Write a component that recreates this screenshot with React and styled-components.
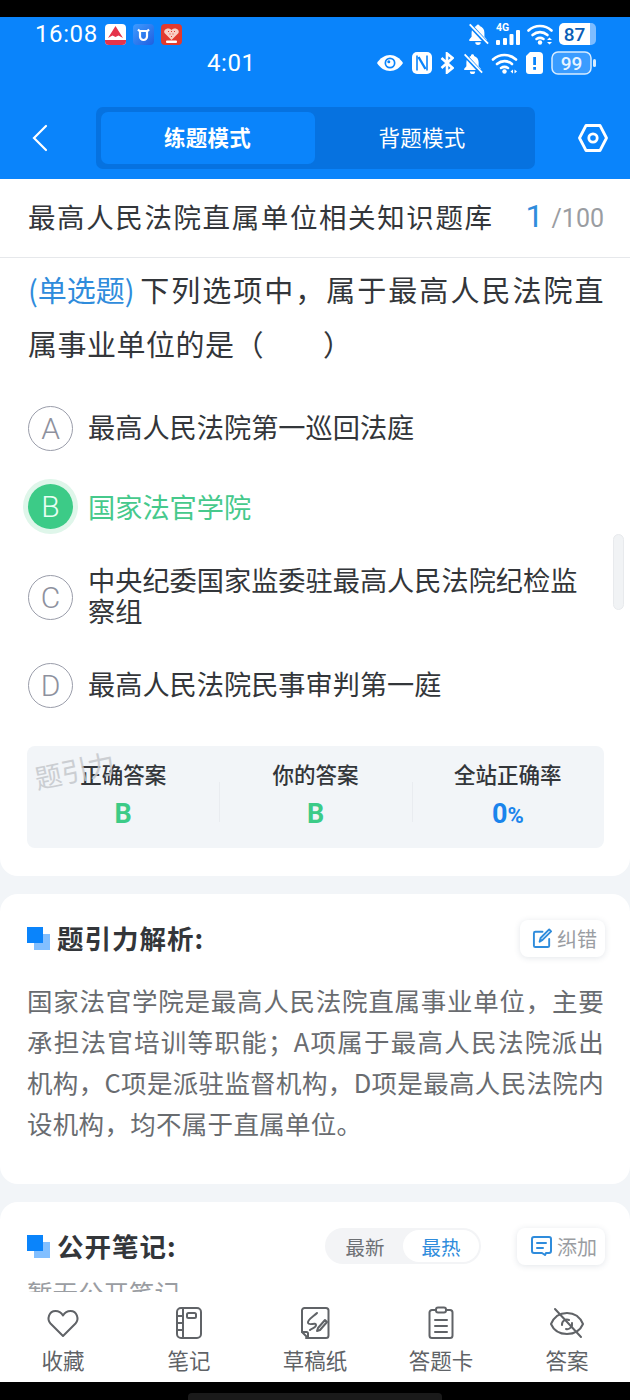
import React from 'react';
import styled, { createGlobalStyle } from 'styled-components';

const GlobalStyle = createGlobalStyle`
  html, body { margin: 0; padding: 0; background: #000; }
  * { box-sizing: border-box; }
  body { font-family: "Noto Sans CJK SC", "Noto Sans", sans-serif; }
`;

const Phone = styled.div`
  width: 630px;
  height: 1400px;
  display: flex;
  flex-direction: column;
  overflow: hidden;
  position: relative;
  background: #f2f5f8;
`;

const TopEdge = styled.div`
  height: 17px;
  background: #000;
  flex: none;
`;

const Header = styled.header`
  height: 162px;
  flex: none;
  background: #0a84fb;
  color: #fff;
  display: flex;
  flex-direction: column;
`;

const StatusRow = styled.div`
  height: 34px;
  flex: none;
  padding: 0 34px 0 35px;
  display: flex;
  align-items: center;
  justify-content: space-between;
`;

const StatusRowTwo = styled.div`
  height: 24px;
  flex: none;
  padding: 0 33px 0 207px;
  display: flex;
  align-items: center;
  justify-content: space-between;
`;

const Clock = styled.span`
  font-family: Roboto, sans-serif;
  font-size: 24px;
  line-height: 1;
  letter-spacing: 0.6px;
`;

const IconRow = styled.div`
  display: flex;
  align-items: center;
  gap: ${(p) => p.$gap || 7}px;
`;

const NavBar = styled.div`
  margin-top: 32px;
  height: 62px;
  padding: 0 22px 0 28px;
  display: flex;
  align-items: center;
  justify-content: space-between;
`;

const ModeSwitch = styled.div`
  width: 439px;
  height: 62px;
  padding: 5px;
  border-radius: 7px;
  background: #0672e0;
  display: flex;
`;

const ModeTab = styled.div`
  width: ${(p) => (p.$active ? 214 : 215)}px;
  padding-bottom: 3px;
  border-radius: 7px;
  background: ${(p) => (p.$active ? '#0a84fb' : 'transparent')};
  font-size: 21.5px;
  font-weight: ${(p) => (p.$active ? 700 : 400)};
  letter-spacing: 0.3px;
  display: flex;
  align-items: center;
  justify-content: center;
`;

const Content = styled.main`
  flex: 1;
  min-height: 0;
  display: flex;
  flex-direction: column;
  gap: 18px;
  overflow: hidden;
`;

const QuestionCard = styled.section`
  flex: none;
  background: #fff;
  border-radius: 0 0 18px 18px;
  height: 697px;
  position: relative;
`;

const TitleBar = styled.div`
  height: 79px;
  padding: 0 26px 5px 28px;
  border-bottom: 1px solid #e6e8eb;
  display: flex;
  align-items: center;
  justify-content: space-between;
`;

const BankTitle = styled.h1`
  margin: 0;
  font-size: 27.5px;
  font-weight: 400;
  letter-spacing: 1.6px;
  color: #33363a;
`;

const Counter = styled.div`
  font-family: Roboto, sans-serif;
  color: #9a9da2;
  font-size: 25px;
  display: flex;
  align-items: baseline;
  gap: 8px;
`;

const CounterNow = styled.span`
  font-size: 32px;
  color: #2f8cdc;
`;

const Question = styled.p`
  margin: 0;
  padding: 4px 26px 0 28px;
  font-size: 29px;
  line-height: 54px;
  letter-spacing: 0.5px;
  text-align: justify;
  color: #33363a;
`;

const QuestionType = styled.span`
  display: inline-block;
  color: #2f8cdc;
  letter-spacing: 0;
  margin-right: 4px;
`;

const Options = styled.div`
  padding: 16px 28px 0;
  display: flex;
  flex-direction: column;
`;

const Option = styled.div`
  min-height: ${(p) => p.$h}px;
  display: flex;
  align-items: center;
  gap: 15px;
`;

const OptionMark = styled.div`
  width: 45px;
  height: 45px;
  flex: none;
  margin-top: ${(p) => (p.$picked ? 1 : 4)}px;
  border-radius: 50%;
  border: ${(p) => (p.$picked ? 'none' : '1.5px solid #9a9daa')};
  background: ${(p) => (p.$picked ? '#3ccb87' : 'transparent')};
  box-shadow: ${(p) => (p.$picked ? '0 0 0 5px #dff6ea' : 'none')};
  color: ${(p) => (p.$picked ? '#e8fff3' : '#8e919e')};
  font-family: Roboto, sans-serif;
  font-size: 30px;
  font-weight: 300;
  display: flex;
  align-items: center;
  justify-content: center;
`;

const OptionText = styled.div`
  font-size: 27.2px;
  line-height: 31px;
  color: ${(p) => (p.$picked ? '#46c98c' : '#33363a')};
`;

const Stats = styled.div`
  margin: 24px 26px 0 27px;
  height: 102px;
  border-radius: 8px;
  background: #f2f5f8;
  display: grid;
  grid-template-columns: repeat(3, 1fr);
  position: relative;
`;

const Stat = styled.div`
  display: flex;
  flex-direction: column;
  align-items: center;
  padding-top: 12px;
  gap: 9px;
  position: relative;
`;

const StatDivider = styled.div`
  position: absolute;
  left: 0;
  top: 36px;
  height: 40px;
  width: 1px;
  background: #e9ecf0;
`;

const StatLabel = styled.div`
  font-size: 21.5px;
  line-height: 32px;
  font-weight: 500;
  color: #33363a;
`;

const StatValue = styled.div`
  font-family: Roboto, sans-serif;
  font-size: 27px;
  line-height: 30px;
  font-weight: 700;
  color: ${(p) => p.$color};
`;

const Percent = styled.span`
  font-size: 22px;
`;

const Watermark = styled.div`
  position: absolute;
  left: 7px;
  top: 7px;
  font-size: 27px;
  line-height: 34px;
  color: #c5c8cc;
  transform: rotate(-12deg);
  opacity: 0.85;
`;

const Card = styled.section`
  flex: none;
  background: #fff;
  border-radius: 18px;
  padding: 24px 25px 0 27px;
  height: ${(p) => p.$h}px;
`;

const CardHead = styled.div`
  height: 40px;
  display: flex;
  align-items: center;
  gap: 7px;
`;

const CardMark = styled.svg`
  width: 23px;
  height: 23px;
  flex: none;
`;

const CardTitle = styled.h2`
  margin: 0;
  padding-bottom: 2px;
  flex: 1;
  font-size: 26.5px;
  font-weight: 700;
  letter-spacing: 1px;
  color: #33363a;
`;

const ChipButton = styled.div`
  height: 37px;
  padding: 0 8px 0 12px;
  border-radius: 8px;
  background: #fff;
  box-shadow: 0 1px 6px rgba(40, 60, 90, 0.13);
  display: flex;
  align-items: center;
  gap: 4px;
  font-size: 20px;
  color: #9a9da2;
`;

const Analysis = styled.p`
  margin: 0;
  padding: 21px 1px 0 0;
  font-size: 25.5px;
  line-height: 41px;
  letter-spacing: 0.3px;
  text-align: justify;
  color: #696c70;
`;

const SortSwitch = styled.div`
  height: 36px;
  width: 156px;
  margin-right: 29px;
  border-radius: 18px;
  background: #f3f4f6;
  display: flex;
  padding: 2px;
`;

const SortTab = styled.div`
  flex: 1;
  border-radius: 16px;
  background: ${(p) => (p.$active ? '#fff' : 'transparent')};
  color: ${(p) => (p.$active ? '#2f8cdc' : '#6d7074')};
  font-size: 19.5px;
  display: flex;
  align-items: center;
  justify-content: center;
`;

const EmptyNote = styled.div`
  padding-top: 8px;
  font-size: 25.5px;
  line-height: 36px;
  color: #9a9da2;
`;

const TabBar = styled.nav`
  height: 90px;
  flex: none;
  background: #fff;
  display: grid;
  grid-template-columns: repeat(5, 1fr);
`;

const Tab = styled.div`
  display: flex;
  flex-direction: column;
  align-items: center;
  padding-top: 13px;
  color: #606367;
`;

const TabIcon = styled.svg`
  width: 36px;
  height: 36px;
  fill: none;
  stroke: currentColor;
  stroke-width: 2;
  stroke-linecap: round;
  stroke-linejoin: round;
`;

const TabLabel = styled.div`
  margin-top: 4px;
  font-size: 21.5px;
  line-height: 30px;
`;

const BottomEdge = styled.div`
  height: 18px;
  flex: none;
  background: #000;
  display: flex;
  align-items: flex-end;
  justify-content: center;
`;

const HomeBar = styled.div`
  width: 254px;
  height: 7px;
  border-radius: 4px 4px 0 0;
  background: #1a1a1a;
`;

const ScrollThumb = styled.div`
  position: absolute;
  right: 6px;
  top: 534px;
  width: 11px;
  height: 76px;
  border-radius: 6px;
  background: #f1f3f5;
  border: 1px solid #e8eaed;
`;

const Bell = ({ size = 22 }) => (
  <svg width={size} height={size} viewBox="0 0 24 24" fill="#fff">
    <path d="M12 1.500c-1.100 0-1.800.8-1.800 1.800C7 4.200 5 7 5 10.500v4.500l-2.500 3v1.500h19V18L19 15v-4.500c0-3.500-2-6.300-5.200-7.200 0-1-.7-1.800-1.800-1.800z" />
    <path d="M9 21h6a3 3 0 0 1-6 0z" />
    <path d="M2.500 1.500l20 21.500" stroke="#0a84fb" strokeWidth="4.500" />
    <path d="M3 1.500l20 21" stroke="#fff" strokeWidth="2" />
  </svg>
);

const Wifi = ({ w = 26, arrows, sideways }) => (
  <svg width={w} height="22" viewBox="0 0 26 22" fill="none" stroke="#fff" strokeWidth="2.600" strokeLinecap="round">
    <path d="M1.500 7.500C8 1.500 18 1.500 24.500 7.500" />
    <path d="M5.500 12c4.500-3.800 10.500-3.800 15 0" />
    <path d="M9.500 16c2.300-1.500 4.700-1.500 7 0" />
    <circle cx="13" cy="19.500" r="2.200" fill="#fff" stroke="none" />
    {arrows && <path d="M20 17h5l-2.500-2.500zM20 19h5l-2.500 2.500z" fill="#fff" stroke="none" />}
    {sideways && <path d="M19 19.500l2.500-2v4zM25.500 19.500l-2.500-2v4z" fill="#fff" stroke="none" />}
  </svg>
);

const BatteryFull = () => (
  <svg width="37" height="22" viewBox="0 0 37 22">
    <path d="M30 0h2a5 5 0 0 1 5 5v12a5 5 0 0 1-5 5h-2z" fill="#7dbcff" />
    <path d="M5 0h26v22H5a5 5 0 0 1-5-5V5a5 5 0 0 1 5-5z" fill="#fff" />
    <text x="15.500" y="17.500" textAnchor="middle" fontFamily="Roboto, sans-serif" fontWeight="500" fontSize="19" fill="#0a5db5">87</text>
  </svg>
);

const BatteryOutline = () => (
  <svg width="46" height="24" viewBox="0 0 46 24">
    <rect x="1" y="1" width="39" height="22" rx="6" fill="#3a9cff" stroke="#d8ecff" strokeWidth="1.500" />
    <rect x="42" y="8" width="3" height="8" rx="1.500" fill="#d8ecff" />
    <text x="20.500" y="18.500" textAnchor="middle" fontFamily="Roboto, sans-serif" fontWeight="500" fontSize="19" fill="#e8f4ff">99</text>
  </svg>
);

const CardLogo = () => (
  <CardMark viewBox="0 0 23 23">
    <rect x="7" y="7" width="16" height="16" fill="#82bfff" />
    <rect x="0" y="0" width="16" height="16" fill="#0a84fb" />
  </CardMark>
);

const tabs = [
  {
    label: '收藏',
    icon: <path d="M18 31L5.500 18.500C1.500 14 4 6 10.500 6c3.500 0 6 2 7.500 4.500C19.500 8 22 6 25.500 6 32 6 34.500 14 30.500 18.500z" />,
  },
  {
    label: '笔记',
    icon: (
      <>
        <rect x="6" y="3" width="24" height="30" rx="4" />
        <path d="M12 3v30M6 11h6M6 18h6M6 25h6" />
        <rect x="16" y="8" width="9" height="5" rx="1.500" />
      </>
    ),
  },
  {
    label: '草稿纸',
    icon: (
      <>
        <path d="M9 33h20a2.500 2.500 0 0 0 2.500-2.500V5.500A2.500 2.500 0 0 0 29 3H7.500A2.500 2.500 0 0 0 5 5.500V27l6 6" />
        <path d="M5 27h4.500a1.500 1.500 0 0 1 1.500 1.500V33" />
        <path d="M20 8c-3 3-10 7-9 10s8-1 8 2-4 3-6 5" />
        <path d="M21 23l7-8 2 2-7 8-3 1z" />
      </>
    ),
  },
  {
    label: '答题卡',
    icon: (
      <>
        <path d="M13 5H9a2.500 2.500 0 0 0-2.500 2.500v23A2.500 2.500 0 0 0 9 33h18a2.500 2.500 0 0 0 2.500-2.500v-23A2.500 2.500 0 0 0 27 5h-4" />
        <rect x="13" y="2.500" width="10" height="5" rx="2" />
        <path d="M12 15h12M12 21h12M12 27h12" />
      </>
    ),
  },
  {
    label: '答案',
    icon: (
      <>
        <path d="M2 19C5 12 11 8 18 8s13 4 16 11c-3 7-9 10-16 10S5 26 2 19z" />
        <path d="M13 20a5 5 0 0 1 7-5M23 18a5 5 0 0 1-6 6" />
        <path d="M6 4l26 28" />
      </>
    ),
  },
];

const App = () => (
  <Phone>
    <GlobalStyle />
    <TopEdge />
    <Header>
      <StatusRow>
        <IconRow $gap={7}>
          <Clock>16:08</Clock>
          <svg width="21" height="21" viewBox="0 0 21 21">
            <rect width="21" height="21" rx="4" fill="#fff" />
            <path d="M3 14L10.500 2 18 14l-4.500-2.500-3 1.500-3-1.500z" fill="#e5344b" />
            <path d="M0 16h21v1a4 4 0 0 1-4 4H4a4 4 0 0 1-4-4z" fill="#e5344b" />
          </svg>
          <svg width="21" height="21" viewBox="0 0 21 21">
            <defs>
              <linearGradient id="uicon" x1="0" y1="0" x2="1" y2="1">
                <stop offset="0" stopColor="#3f9bff" />
                <stop offset="1" stopColor="#1f5fe0" />
              </linearGradient>
            </defs>
            <rect width="21" height="21" rx="4" fill="url(#uicon)" />
            <path d="M5 5.500l1.500 1.500h8L16 5.500M7 7v5.500a3.500 3.500 0 0 0 7 0V7" fill="none" stroke="#fff" strokeWidth="2.200" />
          </svg>
          <svg width="21" height="21" viewBox="0 0 21 21">
            <rect width="21" height="21" rx="4" fill="#e23a2e" />
            <path d="M10.500 16L3.500 9c-1.500-3.500 3.500-6.500 7-3 3.500-3.500 8.500-.5 7 3z" fill="#f8cfc4" />
            <path d="M7 7.500h1M10 7.500h1M13 7.500h1M8.500 10h1M11.500 10h1M10 12.500h1" stroke="#e23a2e" strokeWidth="1.200" />
            <rect x="5" y="16.500" width="11" height="2.500" rx="1" fill="#fff" />
          </svg>
        </IconRow>
        <IconRow $gap={6}>
          <Bell />
          <svg width="26" height="24" viewBox="0 0 26 24" fill="#fff">
            <text x="1" y="9" fontFamily="Roboto, sans-serif" fontSize="10.500" fontWeight="700">4G</text>
            <rect x="1" y="18" width="4" height="5" rx="1" />
            <rect x="8" y="16" width="4" height="7" rx="1" />
            <rect x="14.500" y="12" width="4" height="11" rx="1" />
            <rect x="21" y="8" width="4" height="15" rx="1" />
          </svg>
          <Wifi arrows />
          <BatteryFull />
        </IconRow>
      </StatusRow>
      <StatusRowTwo>
        <Clock>4:01</Clock>
        <IconRow $gap={8}>
          <svg width="28" height="20" viewBox="0 0 28 20">
            <path d="M1 10c3-5 8-8 13-8s10 3 13 8c-3 5-8 8-13 8S4 15 1 10z" fill="#fff" />
            <circle cx="14" cy="10" r="5.500" fill="#0a84fb" />
            <circle cx="14" cy="10" r="3.800" fill="#fff" />
            <circle cx="12.800" cy="8.800" r="1.500" fill="#0a84fb" />
          </svg>
          <svg width="20" height="22" viewBox="0 0 20 22" fill="none">
            <rect x="0" y="0" width="20" height="22" rx="5" fill="#fff" />
            <path d="M5 3.500v15M15 3.500v15" stroke="#0a84fb" strokeWidth="1.600" />
            <path d="M6.500 5l7 12" stroke="#0a84fb" strokeWidth="2.400" />
          </svg>
          <svg width="14" height="22" viewBox="0 0 14 22" fill="none" stroke="#fff" strokeWidth="2.600">
            <path d="M1.500 6l11 10-5.500 4.500v-19L12.500 6l-11 10" />
          </svg>
          <Bell size={21} />
          <Wifi w={27} sideways />
          <svg width="17" height="22" viewBox="0 0 17 22">
            <path d="M4 0h9a4 4 0 0 1 4 4v15a3 3 0 0 1-3 3H3a3 3 0 0 1-3-3V4z" fill="#fff" />
            <rect x="7.200" y="5" width="2.800" height="8" fill="#0a84fb" />
            <rect x="7.200" y="15" width="2.800" height="2.800" fill="#0a84fb" />
          </svg>
          <BatteryOutline />
        </IconRow>
      </StatusRowTwo>
      <NavBar>
        <svg width="24" height="30" viewBox="0 0 24 30" fill="none" stroke="#fff" strokeWidth="2.200" strokeLinecap="round">
          <path d="M18 3L6 15l12 12" />
        </svg>
        <ModeSwitch>
          <ModeTab $active>练题模式</ModeTab>
          <ModeTab>背题模式</ModeTab>
        </ModeSwitch>
        <svg width="30" height="28" viewBox="0 0 30 28" fill="none" stroke="#fff" strokeWidth="2.800" strokeLinejoin="round">
          <path d="M8 1.500h14L28.500 14 22 26.500H8L1.500 14z" />
          <circle cx="15" cy="14" r="4.200" />
        </svg>
      </NavBar>
    </Header>
    <Content>
      <QuestionCard>
        <TitleBar>
          <BankTitle>最高人民法院直属单位相关知识题库</BankTitle>
          <Counter>
            <CounterNow>1</CounterNow>/100
          </Counter>
        </TitleBar>
        <Question>
          <QuestionType>(单选题)</QuestionType>下列选项中，属于最高人民法院直属事业单位的是（　　）
        </Question>
        <Options>
          <Option $h={80}>
            <OptionMark>A</OptionMark>
            <OptionText>最高人民法院第一巡回法庭</OptionText>
          </Option>
          <Option $h={80}>
            <OptionMark $picked>B</OptionMark>
            <OptionText $picked>国家法官学院</OptionText>
          </Option>
          <Option $h={98}>
            <OptionMark>C</OptionMark>
            <OptionText>中央纪委国家监委驻最高人民法院纪检监察组</OptionText>
          </Option>
          <Option $h={78}>
            <OptionMark>D</OptionMark>
            <OptionText>最高人民法院民事审判第一庭</OptionText>
          </Option>
        </Options>
        <Stats>
          <Stat>
            <StatLabel>正确答案</StatLabel>
            <StatValue $color="#3ccb87">B</StatValue>
          </Stat>
          <Stat>
            <StatDivider />
            <StatLabel>你的答案</StatLabel>
            <StatValue $color="#3ccb87">B</StatValue>
          </Stat>
          <Stat>
            <StatDivider />
            <StatLabel>全站正确率</StatLabel>
            <StatValue $color="#1a84ec">
              0<Percent>%</Percent>
            </StatValue>
          </Stat>
          <Watermark>题引力</Watermark>
        </Stats>
      </QuestionCard>
      <Card $h={290}>
        <CardHead>
          <CardLogo />
          <CardTitle>题引力解析:</CardTitle>
          <ChipButton>
            <svg width="21" height="22" viewBox="0 0 22 22" fill="none" stroke="#2f8cdc" strokeWidth="2" strokeLinecap="round" strokeLinejoin="round">
              <path d="M18 12v7a1.500 1.500 0 0 1-1.500 1.500h-13A1.500 1.500 0 0 1 2 19V6a1.500 1.500 0 0 1 1.500-1.500H11" />
              <path d="M8 15l1-4L18 2l2 2-9 9z" />
            </svg>
            纠错
          </ChipButton>
        </CardHead>
        <Analysis>
          国家法官学院是最高人民法院直属事业单位，主要承担法官培训等职能；A项属于最高人民法院派出机构，C项是派驻监督机构，D项是最高人民法院内设机构，均不属于直属单位。
        </Analysis>
      </Card>
      <Card $h={200}>
        <CardHead>
          <CardLogo />
          <CardTitle>公开笔记:</CardTitle>
          <SortSwitch>
            <SortTab>最新</SortTab>
            <SortTab $active>最热</SortTab>
          </SortSwitch>
          <ChipButton>
            <svg width="24" height="24" viewBox="0 0 24 24" fill="none" stroke="#2f8cdc" strokeWidth="2" strokeLinecap="round" strokeLinejoin="round">
              <path d="M5 3h15a2 2 0 0 1 2 2v12a2 2 0 0 1-2 2h-3l-1 2-3-2H5a2 2 0 0 1-2-2V5a2 2 0 0 1 2-2z" />
              <path d="M8 9h9M8 14h6" />
            </svg>
            添加
          </ChipButton>
        </CardHead>
        <EmptyNote>暂无公开笔记</EmptyNote>
      </Card>
    </Content>
    <TabBar>
      {tabs.map((tab) => (
        <Tab key={tab.label}>
          <TabIcon viewBox="0 0 36 36">{tab.icon}</TabIcon>
          <TabLabel>{tab.label}</TabLabel>
        </Tab>
      ))}
    </TabBar>
    <BottomEdge>
      <HomeBar />
    </BottomEdge>
    <ScrollThumb />
  </Phone>
);

export default App;
